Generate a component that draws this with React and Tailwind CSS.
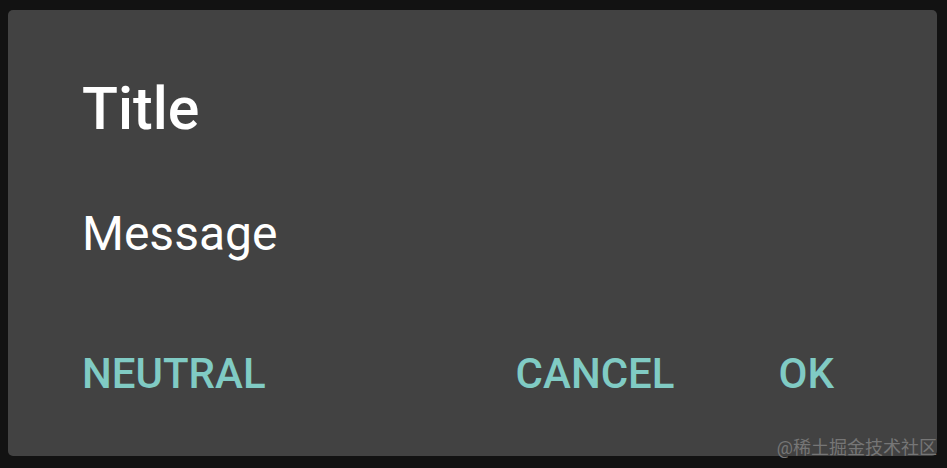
import React from 'react';

const App = () => {
    const font = { fontFamily: 'Roboto, "Noto Sans CJK SC", sans-serif' };
    return (
        <div className="w-[947px] h-[468px] bg-[#121212] pt-[10px] pl-[8px] pr-[10px] pb-[12px] relative" style={font}>
            <div className="w-full h-full bg-[#424242] rounded-[5px] flex flex-col">
                <div className="pl-[74px] pt-[64px]">
                    <h1 className="text-[59px] leading-[70px] font-medium text-white">Title</h1>
                </div>
                <div className="pl-[74px] pt-[60px]">
                    <p className="text-[48px] leading-[60px] text-white">Message</p>
                </div>
                <div className="flex items-center pl-[74px] pr-[103px] pt-[85px]">
                    <span className="text-[42px] leading-[50px] font-medium text-[#80cbc4]">NEUTRAL</span>
                    <span className="ml-auto text-[42px] leading-[50px] font-medium text-[#80cbc4]">CANCEL</span>
                    <span className="ml-[104px] text-[42px] leading-[50px] font-medium text-[#80cbc4]">OK</span>
                </div>
            </div>
            <div className="absolute right-[10px] bottom-[8px] text-[18px] leading-[24px] text-[#767676]">
                @稀土掘金技术社区
            </div>
        </div>
    );
};

export default App;
